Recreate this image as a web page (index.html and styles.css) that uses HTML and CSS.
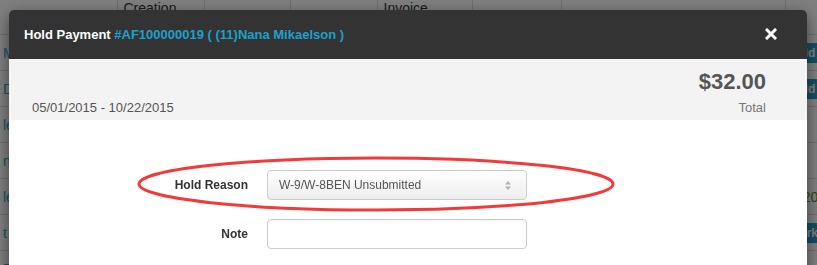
FILE: index.html
```html
<!DOCTYPE html>
<html lang="en">
<head>
    <meta charset="UTF-8">
    <title>Hold Payment</title>
    <link rel="stylesheet" href="styles.css">
</head>
<body>

<!-- Page behind the modal -->
<table class="list">
    <thead>
        <tr>
            <th class="col-name"></th>
            <th class="col-date">Creation<br>Date</th>
            <th class="col-a"></th>
            <th class="col-b"></th>
            <th class="col-c">Invoice<br>No.</th>
            <th class="col-d"></th>
            <th class="col-e"></th>
            <th class="col-f"></th>
        </tr>
    </thead>
    <tbody>
        <tr><td><a>Mark</a></td><td></td><td></td><td></td><td></td><td></td><td></td><td><span class="badge">Paid Invoice</span></td></tr>
        <tr><td><a>Dan</a></td><td></td><td></td><td></td><td></td><td></td><td></td><td><span class="badge">Paid Invoice</span></td></tr>
        <tr><td><a>lee</a></td><td></td><td></td><td></td><td></td><td></td><td></td><td></td></tr>
        <tr><td><a>nko</a></td><td></td><td></td><td></td><td></td><td></td><td></td><td></td></tr>
        <tr><td><a>lea</a></td><td></td><td></td><td></td><td></td><td></td><td></td><td><span class="date">1/20</span></td></tr>
        <tr><td><a>t Co</a></td><td></td><td></td><td></td><td></td><td></td><td></td><td><span class="badge">Mark</span></td></tr>
        <tr><td><a>Dan</a></td><td></td><td></td><td></td><td></td><td></td><td></td><td></td></tr>
    </tbody>
</table>

<div class="backdrop"></div>

<div class="modal-wrap">
    <div class="modal">
        <div class="modal-header">
            <h4 class="modal-title">Hold Payment <span class="ref">#AF100000019 ( (11)Nana Mikaelson )</span></h4>
            <span class="close">
                <svg width="12" height="12" viewBox="0 0 12 12">
                    <path d="M2 2 L10 10 M10 2 L2 10" stroke="#fff" stroke-width="3" stroke-linecap="square"/>
                </svg>
            </span>
        </div>

        <div class="summary">
            <div class="period">05/01/2015 - 10/22/2015</div>
            <div class="total-box">
                <div class="amount">$32.00</div>
                <div class="total-label">Total</div>
            </div>
        </div>

        <div class="modal-body">
            <div class="form-row">
                <label class="form-label">Hold Reason</label>
                <div class="select-box">
                    <span>W-9/W-8BEN Unsubmitted</span>
                    <svg width="6" height="9" viewBox="0 0 6 9">
                        <path d="M3 0 L6 3.5 L0 3.5 Z M3 9 L6 5.5 L0 5.5 Z" fill="#b0b0b0"/>
                    </svg>
                </div>
            </div>
            <div class="form-row">
                <label class="form-label">Note</label>
                <input class="text-input" type="text">
            </div>

            <!-- red annotation drawn around the hold reason -->
            <svg class="mark" width="480" height="58" viewBox="0 0 480 58">
                <ellipse cx="240" cy="29" rx="237" ry="26" fill="none" stroke="#f23a3a" stroke-width="3"/>
            </svg>
        </div>
    </div>
</div>

</body>
</html>
```

FILE: styles.css
```css
* {
    box-sizing: border-box;
}

body {
    margin: 0;
    font-family: "Liberation Sans", Arial, sans-serif;
    background-color: #ffffff;
    color: #333;
    overflow: hidden;
}

/* Background list */
.list {
    border-collapse: collapse;
    width: 900px;
    font-size: 14px;
}

.list th {
    height: 33px;
    padding: 0 6px;
    text-align: left;
    vertical-align: top;
    font-weight: normal;
    line-height: 17px;
    color: #333;
    border-left: 1px solid #ddd;
    border-bottom: 1px solid #ddd;
    overflow: hidden;
}

.list th:first-child {
    border-left: none;
}

.col-name { width: 117px; }
.col-date { width: 87px; }
.col-a { width: 86px; }
.col-b { width: 87px; }
.col-c { width: 95px; }
.col-d { width: 89px; }
.col-e { width: 224px; }

.list td {
    height: 36px;
    padding: 0 3px;
    border-bottom: 1px solid #ddd;
    font-size: 14px;
}

.list td a {
    color: #2ba6cb;
}

.list td:last-child {
    padding-left: 0;
}

.badge {
    display: inline-block;
    background-color: #2b9fc4;
    color: #fff;
    font-size: 12px;
    font-weight: bold;
    padding: 3px 5px;
    border-radius: 2px;
}

.date {
    display: inline-block;
    padding-left: 6px;
    color: #5c8a1e;
}

/* Modal */
.backdrop {
    position: fixed;
    inset: 0;
    background-color: rgba(0, 0, 0, 0.5);
}

.modal-wrap {
    position: fixed;
    inset: 0;
    padding: 10px 0 0 9px;
}

.modal {
    width: 798px;
    height: 300px;
    background-color: #fff;
    border-radius: 6px 6px 0 0;
    box-shadow: 0 5px 15px rgba(0, 0, 0, 0.5);
}

.modal-header {
    height: 49px;
    display: flex;
    align-items: center;
    justify-content: space-between;
    padding: 0 30px 0 15px;
    background-color: #333;
    border-radius: 5px 5px 0 0;
}

.modal-title {
    margin: 0;
    font-size: 13px;
    font-weight: bold;
    color: #fff;
}

.modal-title .ref {
    color: #1ba1cb;
}

.close {
    display: flex;
    margin-top: -1px;
}

.summary {
    height: 61px;
    display: flex;
    justify-content: space-between;
    align-items: flex-end;
    padding: 10px 41px 3px 23px;
    background-color: #f3f3f3;
}

.period {
    font-size: 13px;
    line-height: 18px;
    color: #555;
}

.total-box {
    text-align: right;
}

.amount {
    font-size: 22px;
    font-weight: bold;
    line-height: 26px;
    margin-bottom: 4px;
    color: #555;
}

.total-label {
    font-size: 13px;
    line-height: 18px;
    color: #777;
}

.modal-body {
    position: relative;
    padding-top: 50px;
    display: flex;
    flex-direction: column;
    gap: 19px;
}

.form-row {
    display: flex;
    align-items: center;
}

.form-label {
    width: 258px;
    padding-right: 19px;
    text-align: right;
    font-size: 12px;
    font-weight: bold;
    color: #333;
}

.select-box {
    width: 260px;
    height: 30px;
    display: flex;
    align-items: center;
    justify-content: space-between;
    padding: 0 15px 0 11px;
    border: 1px solid #ccc;
    border-radius: 4px;
    background: linear-gradient(#ffffff, #ededed);
    font-size: 12px;
    color: #555;
}

.text-input {
    width: 260px;
    height: 30px;
    margin: 0;
    border: 1px solid #ccc;
    border-radius: 4px;
    background-color: #fff;
    box-shadow: inset 0 1px 1px rgba(0, 0, 0, 0.05);
}

.mark {
    position: absolute;
    left: 127px;
    top: 35px;
}
```
